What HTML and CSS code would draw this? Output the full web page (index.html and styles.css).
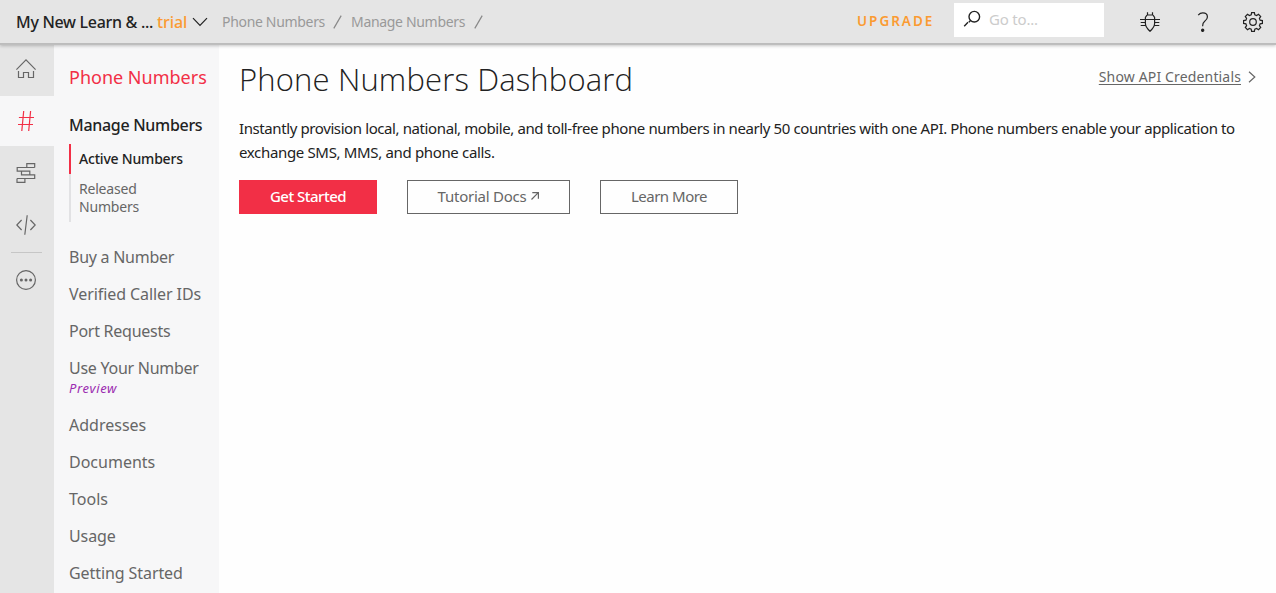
FILE: index.html
```html
<!DOCTYPE html>
<html lang="en">
<head>
<meta charset="utf-8">
<title>Phone Numbers Dashboard</title>
<link rel="stylesheet" href="styles.css">
</head>
<body>
<header class="topbar">
  <div class="account"><span class="account-name">My New Learn &amp; ...</span><span class="trial">trial</span>
    <svg class="chevron" width="16" height="10" viewBox="0 0 16 10"><path d="M1 1.2 8 8.4 15 1.2"/></svg>
  </div>
  <nav class="crumbs"><span class="crumb-one">Phone Numbers</span><svg width="9" height="14" viewBox="0 0 9 14"><path d="M.8 13.4 8.2.6"/></svg><span class="crumb-two">Manage Numbers</span><svg width="9" height="14" viewBox="0 0 9 14"><path d="M.8 13.4 8.2.6"/></svg></nav>
  <a class="upgrade">UPGRADE</a>
  <div class="search">
    <svg width="18" height="18" viewBox="0 0 18 18"><circle cx="11.3" cy="6.7" r="5.3"/><path d="M7.3 10.7 5.8 12.2M5 12.3 1.2 16.2" /></svg>
    <span class="placeholder">Go to...</span>
  </div>
  <div class="tools">
    <svg class="bug" width="20" height="20" viewBox="0 0 20 20"><path d="M7.5.2v2.6M12.5.2v2.6M7 3h6M7 3 5.4 5.5v6c0 2.8 2 5.4 4.6 7.8 2.6-2.4 4.6-5 4.6-7.8v-6L13 3M0 7.5h20M.7 10.5h4.7M.7 13.5h5M14.6 10.5h4.7M14.3 13.5h5"/></svg>
    <svg class="help" width="12" height="20" viewBox="0 0 12 20"><path d="M1.2 3.1C2.5 1.6 4 .9 5.8.9c2.7 0 4.6 1.7 4.6 4 0 2-1.2 3.1-2.7 4.3C6.2 10.3 5.6 11.2 5.6 14.2"/><circle cx="5.7" cy="18.2" r="1.1"/></svg>
    <svg class="gear" width="20" height="20" viewBox="0 0 20 20"><path d="M8.2 2.9 8.6.6h2.8l.4 2.3 1.8.7 1.9-1.3 2.2 2.2-1.3 1.9.7 1.8 2.3.4v2.8l-2.3.4-.7 1.8 1.3 1.9-2.2 2.2-1.9-1.3-1.8.7-.4 2.3H8.6l-.4-2.3-1.8-.7-1.9 1.3-2.2-2.2 1.3-1.9-.7-1.8-2.3-.4V8.6l2.3-.4.7-1.8-1.3-1.9 2.2-2.2 1.9 1.3z"/><circle cx="10" cy="10" r="3.3"/></svg>
  </div>
</header>
<div class="shell">
  <nav class="rail">
    <div class="rail-item rail-home"><svg width="20" height="20" viewBox="0 0 20 20"><path d="M.4 10.6 10 .9l9.6 9.7M2.5 12v6.5h5v-5h5v5h5V12"/></svg></div>
    <div class="rail-item rail-active"><svg width="16" height="20" viewBox="0 0 16 20"><path d="M5.7 0 3.8 20M12.6 0l-1.9 20M.9 6.5H16M0 13.5h15"/></svg></div>
    <div class="rail-item rail-flow"><svg width="20" height="20" viewBox="0 0 20 20"><path d="M10.8 4.5V.7h7.9v3.8M18.7 4.5H1.2v3.7h12.6v3.6H5.5V8.2M13.8 11.8h4.9v3.7H1M1 15.5v3.8h7.9v-3.8"/></svg></div>
    <div class="rail-item rail-code"><svg width="20" height="20" viewBox="0 0 20 20"><path d="M5.6 5 .8 10l4.8 5M14.4 5l4.8 5-4.8 5M11.2.3 8.8 19.7"/></svg></div>
    <div class="rail-rule"></div>
    <div class="rail-item rail-more"><svg width="20" height="20" viewBox="0 0 20 20"><circle cx="10" cy="10" r="9.4"/><g class="dots"><circle cx="5.4" cy="10" r="1.5"/><circle cx="10" cy="10" r="1.5"/><circle cx="14.6" cy="10" r="1.5"/></g></svg></div>
  </nav>
  <aside class="sidebar">
    <h2>Phone Numbers</h2>
    <div class="section">Manage Numbers</div>
    <div class="sub sub-active">Active Numbers</div>
    <div class="sub sub-idle">Released<br>Numbers</div>
    <ul class="menu">
      <li class="tight">Buy a Number</li>
      <li class="snug">Verified Caller IDs</li>
      <li class="tight">Port Requests</li>
      <li class="has-preview"><span class="tight">Use Your Number</span><em>Preview</em></li>
      <li>Addresses</li>
      <li>Documents</li>
      <li>Tools</li>
      <li class="snug">Usage</li>
      <li class="snug">Getting Started</li>
    </ul>
  </aside>
  <main class="main">
    <div class="heading">
      <h1>Phone Numbers Dashboard</h1>
      <a class="credentials"><span>Show API Credentials</span><svg width="8" height="12" viewBox="0 0 8 12"><path d="M1 .7 6.8 6 1 11.3"/></svg></a>
    </div>
    <p class="intro"><span class="line-one">Instantly provision local, national, mobile, and toll-free phone numbers in nearly 50 countries with one API. Phone numbers enable your application to</span><br><span class="line-two">exchange SMS, MMS, and phone calls.</span></p>
    <div class="actions">
      <a class="btn primary">Get Started</a>
      <a class="btn docs">Tutorial Docs<svg width="8" height="8" viewBox="0 0 8 8"><path d="M.5 7.5 7.3.7M1.3.6h6.1v6.1"/></svg></a>
      <a class="btn more">Learn More</a>
    </div>
  </main>
</div>
</body>
</html>
```
FILE: styles.css
```css
* { box-sizing: border-box; }
body { margin: 0; width: 1276px; height: 593px; overflow: hidden; display: flex; flex-direction: column; background: #fefefe; color: #222; font: 15px/24px "Noto Sans", "Open Sans", sans-serif; }
svg { display: block; flex: none; fill: none; stroke: #666; stroke-width: 1.2; }
span, a, h1, h2, li { white-space: nowrap; }
.topbar { position: relative; z-index: 1; flex: none; height: 44px; display: flex; align-items: flex-start; background: #e5e5e5; border-bottom: 1px solid #bcbcbc; box-shadow: 0 1px 0 #bebebe, 0 2px 3px rgba(0, 0, 0, .22); }
.account { display: flex; align-items: center; margin-left: 16px; height: 43px; width: 206px; font-size: 16px; font-weight: 500; }
.account-name { width: 141px; letter-spacing: -.3px; }
.trial { width: 35px; letter-spacing: -.1px; color: #fb9b32; }
.chevron, .search svg, .tools svg { stroke: #222; }
.crumbs { display: flex; align-items: center; height: 44px; width: 300px; color: #999; font-size: 14px; letter-spacing: -.32px; }
.crumbs svg { stroke: #888; }
.crumb-one { width: 111px; }
.crumb-one + svg { margin-right: 9px; }
.crumb-two { width: 123px; }
.upgrade { margin-left: 335px; width: 97px; line-height: 42px; font-size: 13.5px; font-weight: 600; letter-spacing: 2px; color: #fb9b32; }
.search { display: flex; margin-top: 3px; width: 150px; height: 34px; padding: 7px 0 0 9px; background: #fff; }
.placeholder { margin: -3px 0 0 8px; letter-spacing: -.2px; color: #ccc; }
.search svg { stroke-width: 1.4; }
.tools { display: flex; margin: 12px 0 0 36px; }
.bug { margin-right: 37px; }
.help { margin-right: 34px; }
.help circle { fill: #222; }
.shell { display: flex; flex: 1; min-height: 0; }
.rail { width: 54px; flex: none; background: #e5e5e5; }
.rail-item { display: flex; justify-content: center; align-items: center; height: 52px; padding-right: 2px; }
.rail-home { padding-bottom: 2px; }
.rail-active { height: 50px; background: #f7f7f8; }
.rail-active svg { stroke: #f22f46; }
.rail-flow { height: 54px; }
.rail-code { height: 51px; padding-bottom: 1px; }
.rail-rule { margin: 1px 12px 0 11px; height: 1px; background: #c6c6c6; }
.rail-more { height: 54px; }
.rail-more .dots { fill: #666; stroke: none; }
.sidebar { width: 165px; flex: none; padding: 21px 0 0 15px; background: #f7f7f8; color: #666; }
.sidebar h2 { margin: 0; font-size: 18px; font-weight: 400; color: #f22f46; }
.section { margin-top: 24px; font-size: 16px; font-weight: 500; letter-spacing: -.3px; color: #222; }
.sub { padding-left: 8px; border-left: 2px solid #e2e2e4; font-size: 14px; letter-spacing: -.2px; }
.sub-active { margin-top: 7px; height: 30px; line-height: 29px; color: #222; border-color: #f22f46; font-weight: 500; }
.sub-idle { height: 48px; padding-top: 6px; line-height: 18px; }
.menu { list-style: none; margin: 23px 0 0; padding: 0; font-size: 16px; }
.menu li { height: 24px; margin-bottom: 13px; }
.tight { letter-spacing: -.26px; }
.snug { letter-spacing: -.08px; }
.menu .has-preview { height: 44px; }
.has-preview em { display: block; line-height: 16px; font-size: 13px; letter-spacing: .65px; color: #9b2bb0; }
.main { flex: 1; min-width: 0; padding: 0 20px; }
.heading { display: flex; justify-content: space-between; }
h1 { margin: 13px 0 0; height: 59px; line-height: 44px; font-family: "Open Sans", "Noto Sans", sans-serif; font-size: 31px; font-weight: 300; letter-spacing: .15px; }
.credentials { display: flex; align-items: center; gap: 7px; height: 24px; margin-top: 21px; font-size: 14px; letter-spacing: .15px; color: #666; }
.credentials span { text-decoration: underline; text-underline-offset: 2px; }
.intro { margin: 0; }
.line-one { letter-spacing: -.4px; }
.line-two { letter-spacing: -.34px; }
.actions { display: flex; gap: 30px; margin-top: 16px; }
.btn { display: flex; align-items: center; justify-content: center; height: 34px; width: 138px; padding-bottom: 2px; border: 1px solid #666; font-size: 15px; letter-spacing: -.5px; color: #666; }
.primary { background: #f22f46; border-color: #f22f46; color: #fff; font-weight: 500; }
.docs { width: 163px; gap: 5px; letter-spacing: -.25px; }
```
